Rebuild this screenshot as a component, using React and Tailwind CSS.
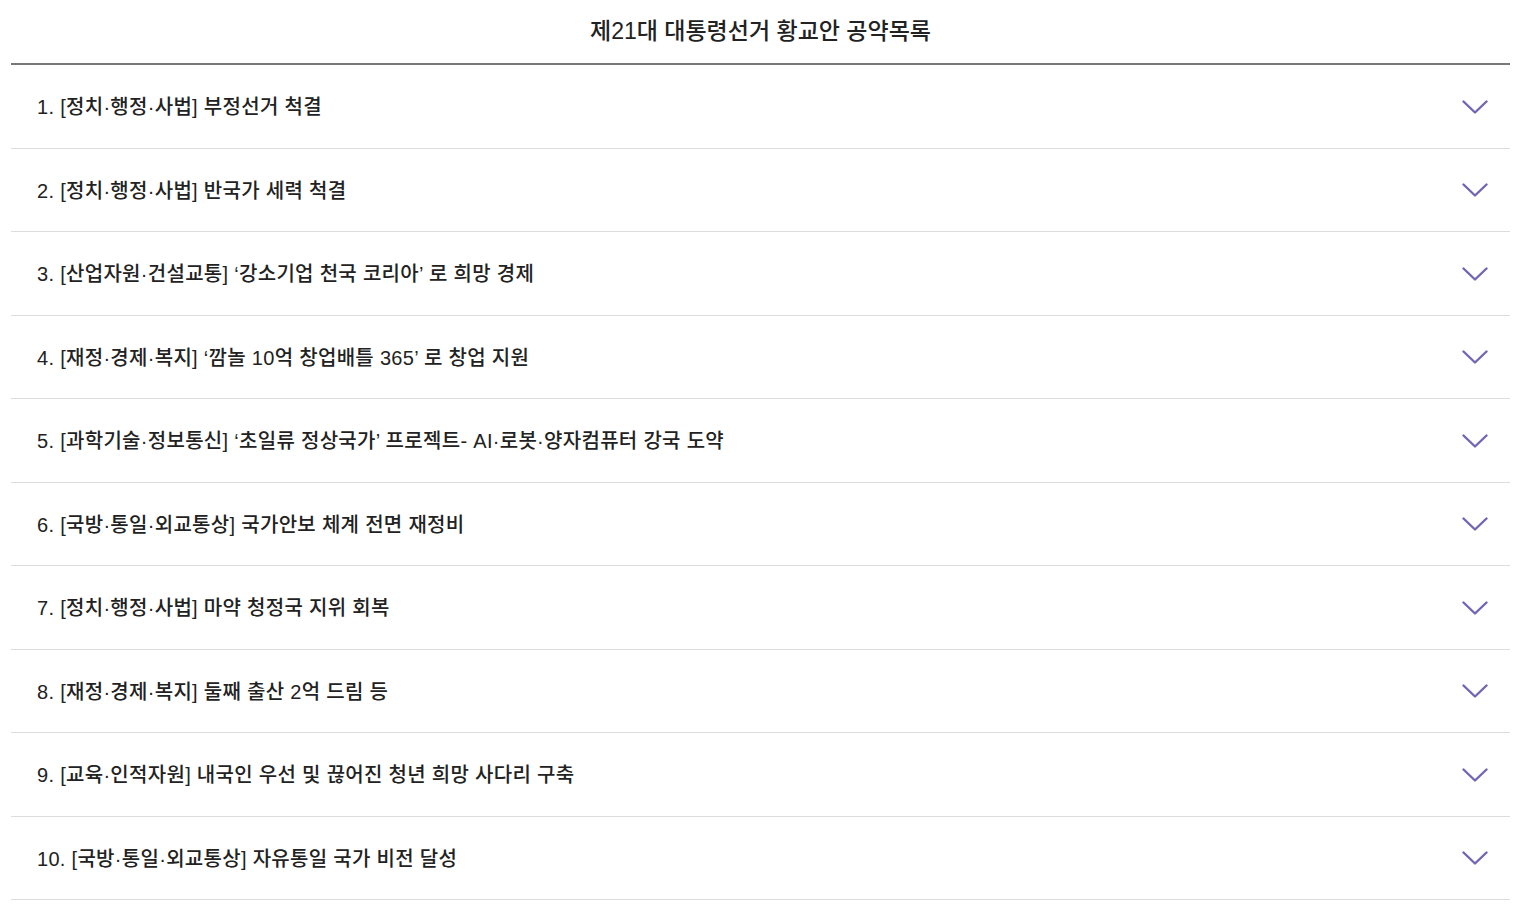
const pledges = [
  "1. [정치·행정·사법] 부정선거 척결",
  "2. [정치·행정·사법] 반국가 세력 척결",
  "3. [산업자원·건설교통] ‘강소기업 천국 코리아’ 로 희망 경제",
  "4. [재정·경제·복지] ‘깜놀 10억 창업배틀 365’ 로 창업 지원",
  "5. [과학기술·정보통신] ‘초일류 정상국가’ 프로젝트- AI·로봇·양자컴퓨터 강국 도약",
  "6. [국방·통일·외교통상] 국가안보 체계 전면 재정비",
  "7. [정치·행정·사법] 마약 청정국 지위 회복",
  "8. [재정·경제·복지] 둘째 출산 2억 드림 등",
  "9. [교육·인적자원] 내국인 우선 및 끊어진 청년 희망 사다리 구축",
  "10. [국방·통일·외교통상] 자유통일 국가 비전 달성",
];

function Chevron() {
  return (
    <svg width="26" height="15" viewBox="0 0 26 15" fill="none" className="mt-[2px]">
      <path
        d="M1.5 1.5 L13 12.5 L24.5 1.5"
        stroke="#7364b6"
        strokeWidth="2.4"
        strokeLinecap="round"
        strokeLinejoin="round"
      />
    </svg>
  );
}

export default function App() {
  return (
    <div
      className="min-h-screen bg-white pl-[11px] pr-[25px] text-[#222]"
      style={{ fontFamily: '"Liberation Sans", "Noto Sans CJK KR", sans-serif' }}
    >
      {/* Title */}
      <h1 className="h-[63px] flex items-center justify-center text-[23px] font-medium text-[#222] pb-[1px]">
        제21대 대통령선거 황교안 공약목록
      </h1>

      {/* List */}
      <ul className="border-t-2 border-[#777]">
        {pledges.map((p) => (
          <li
            key={p}
            className="h-[83.5px] flex items-center justify-between pl-[26px] pr-[22px] border-b border-[#ddd] cursor-pointer"
          >
            <span className="text-[20px] font-medium tracking-[0.3px] pt-[2px]">{p}</span>
            <Chevron />
          </li>
        ))}
      </ul>
    </div>
  );
}
